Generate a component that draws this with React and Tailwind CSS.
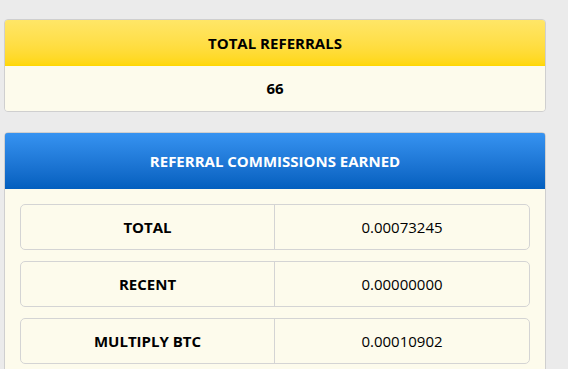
const rows = [
  { label: 'TOTAL', value: '0.00073245' },
  { label: 'RECENT', value: '0.00000000' },
  { label: 'MULTIPLY BTC', value: '0.00010902' },
];

export default function App() {
  return (
    <div
      className="min-h-[369px] bg-[#ebebeb] pl-[4px] pr-[22px] pt-[19px] text-[15px] text-black"
      style={{ fontFamily: '"Open Sans", "Liberation Sans", sans-serif' }}
    >
      <div className="rounded-[4px] border border-[#cfcfcf] overflow-hidden">
        <div className="h-[46px] flex items-center justify-center font-bold bg-gradient-to-b from-[#ffe667] to-[#ffd700]">
          TOTAL REFERRALS
        </div>
        <div className="h-[45px] flex items-center justify-center font-bold bg-[#fdfbec]">66</div>
      </div>

      <div className="mt-[20px] rounded-[4px] border border-[#cfcfcf] overflow-hidden bg-[#fdfbec]">
        <div className="h-[57px] -mx-px -mt-px flex items-center justify-center font-bold text-white rounded-t-[4px] border border-b-0 border-[#0a5fbf] bg-gradient-to-b from-[#3693f1] to-[#035fbe]">
          REFERRAL COMMISSIONS EARNED
        </div>
        <div className="px-[15px] pt-[15px] pb-[20px] flex flex-col gap-[11px]">
          {rows.map((r) => (
            <div key={r.label} className="h-[46px] grid grid-cols-2 rounded-[5px] border border-[#d4d4d4]">
              <div className="flex items-center justify-center font-bold border-r border-[#d4d4d4]">{r.label}</div>
              <div className="flex items-center justify-center">{r.value}</div>
            </div>
          ))}
        </div>
      </div>
    </div>
  );
}
